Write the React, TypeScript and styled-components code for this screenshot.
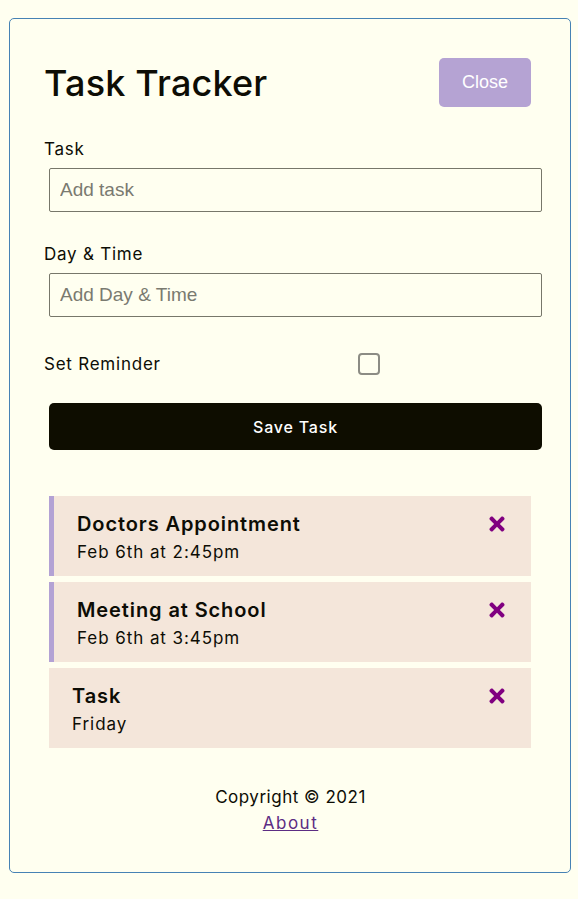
import React from "react";
import styled, { createGlobalStyle } from "styled-components";
import { FaTimes } from "react-icons/fa";

const GlobalStyle = createGlobalStyle`
  * { box-sizing: border-box; }
  html, body { margin: 0; padding: 0; background: #fffff0; }
  body {
    font-family: Inter, "Open Sans", sans-serif;
    color: #0d0d05;
  }
`;

const Container = styled.div`
  width: 562px;
  margin: 18px 0 0 9px;
  border: 1px solid steelblue;
  border-radius: 5px;
  padding: 34px 33px 36px 34px;
`;

const Header = styled.header`
  display: flex;
  justify-content: space-between;
  align-items: center;
  height: 59px;
`;

const Title = styled.h1`
  margin: 0;
  font-size: 36px;
  font-weight: 500;
  letter-spacing: 0.005em;
  line-height: 44px;
`;

const Button = styled.button<{ $bg: string; $block?: boolean }>`
  display: ${(p) => (p.$block ? "block" : "inline-block")};
  width: ${(p) => (p.$block ? "100%" : "auto")};
  background: ${(p) => p.$bg};
  color: #fff;
  border: none;
  border-radius: 5px;
  margin: 5px;
  cursor: pointer;
`;

const CloseButton = styled(Button)`
  font-family: "Liberation Sans", Arial, sans-serif;
  font-size: 18px;
  line-height: 21px;
  padding: 14px 23px;
  height: 49px;
  margin: 5px 6px 5px 5px;
`;

const SaveButton = styled(Button)`
  font-family: Inter, "Open Sans", sans-serif;
  font-size: 16px;
  font-weight: 500;
  letter-spacing: 0.05em;
  height: 47px;
  margin: 0 0 0 5px;
`;

const Form = styled.form`
  display: flex;
  flex-direction: column;
`;

const FormControl = styled.div<{ $top: number }>`
  margin-top: ${(p) => p.$top}px;
`;

const Label = styled.label`
  display: block;
  font-size: 17px;
  line-height: 24px;
  letter-spacing: 0.045em;
`;

const Input = styled.input`
  display: block;
  width: 100%;
  height: 44px;
  margin: 7px 0 0 5px;
  padding: 3px 10px;
  font-family: "Liberation Sans", Arial, sans-serif;
  font-size: 19px;
  background: transparent;
  border: 1px solid #77776a;
  border-radius: 2px;
  color: #222;
  &::placeholder {
    color: #7a7a70;
  }
`;

const CheckRow = styled.div`
  display: flex;
  align-items: center;
  margin-top: 35px;
`;

const CheckLabel = styled(Label)`
  flex: 1;
`;

const CheckArea = styled.div`
  flex: 2;
  display: flex;
  justify-content: center;
  margin-right: 5px;
`;

const Check = styled.input`
  appearance: none;
  width: 22px;
  height: 22px;
  margin: 0;
  border: 2px solid #8c8c84;
  border-radius: 4px;
  background: transparent;
`;

const SaveWrap = styled.div`
  margin-top: 27px;
`;

const TaskList = styled.div`
  margin-top: 46px;
  display: flex;
  flex-direction: column;
  gap: 6px;
`;

const TaskItem = styled.div<{ $reminder: boolean }>`
  height: 80px;
  margin: 0 6px 0 5px;
  background: #f4e6da;
  border-left: ${(p) => (p.$reminder ? "5px solid #b3a2d4" : "none")};
  padding: 14px 23px 0 23px;
`;

const TaskTitle = styled.h3`
  display: flex;
  justify-content: space-between;
  align-items: center;
  margin: 0;
  font-size: 20px;
  font-weight: 600;
  line-height: 28px;
  letter-spacing: 0.045em;
`;

const TaskDay = styled.p`
  margin: 1px 0 0;
  font-size: 17px;
  line-height: 26px;
  letter-spacing: 0.055em;
`;

const Footer = styled.footer`
  margin-top: 36px;
  text-align: center;
  font-size: 17px;
  line-height: 26px;
  letter-spacing: 0.03em;
`;

const AboutLink = styled.a`
  color: #5c2d83;
  text-decoration: underline;
  letter-spacing: 0.09em;
`;

const tasks = [
  { id: 1, text: "Doctors Appointment", day: "Feb 6th at 2:45pm", reminder: true },
  { id: 2, text: "Meeting at School", day: "Feb 6th at 3:45pm", reminder: true },
  { id: 3, text: "Task", day: "Friday", reminder: false },
];

export default function App() {
  return (
    <>
      <GlobalStyle />
      <Container>
        <Header>
          <Title>Task Tracker</Title>
          <CloseButton $bg="#b5a3d3">Close</CloseButton>
        </Header>
        <Form onSubmit={(e) => e.preventDefault()}>
          <FormControl $top={25}>
            <Label>Task</Label>
            <Input type="text" placeholder="Add task" />
          </FormControl>
          <FormControl $top={30}>
            <Label>Day &amp; Time</Label>
            <Input type="text" placeholder="Add Day & Time" />
          </FormControl>
          <CheckRow>
            <CheckLabel>Set Reminder</CheckLabel>
            <CheckArea>
              <Check type="checkbox" />
            </CheckArea>
          </CheckRow>
          <SaveWrap>
            <SaveButton $bg="#0e0d00" $block type="submit">
              Save Task
            </SaveButton>
          </SaveWrap>
        </Form>
        <TaskList>
          {tasks.map((t) => (
            <TaskItem key={t.id} $reminder={t.reminder}>
              <TaskTitle>
                {t.text}
                <FaTimes size={22} color="#800080" />
              </TaskTitle>
              <TaskDay>{t.day}</TaskDay>
            </TaskItem>
          ))}
        </TaskList>
        <Footer>
          <div>Copyright &copy; 2021</div>
          <AboutLink href="#">About</AboutLink>
        </Footer>
      </Container>
    </>
  );
}
